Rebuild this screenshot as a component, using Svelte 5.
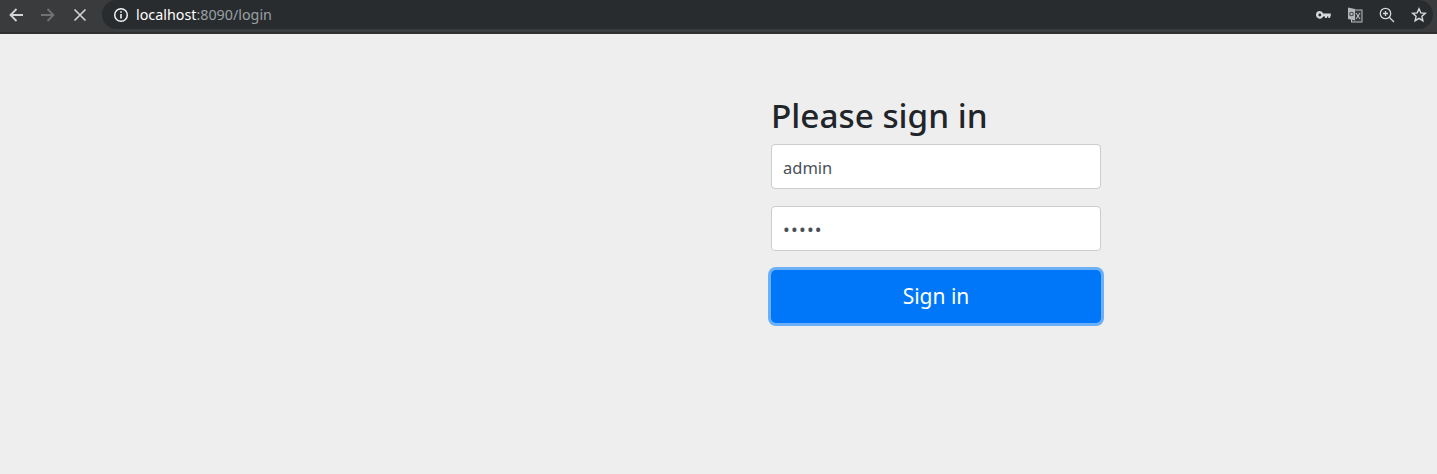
<script>
    let username = 'admin';
    let password = 'admin';
</script>

<div class="toolbar">
    <button class="nav" aria-label="Back">
        <svg width="16" height="16" viewBox="0 0 16 16"><path d="M15 8H3M8.500 2L2.500 8l6 6" fill="none" stroke="#d4d5d6" stroke-width="1.800"/></svg>
    </button>
    <button class="nav" aria-label="Forward">
        <svg width="16" height="16" viewBox="0 0 16 16"><path d="M1 8h12M7.500 2l6 6-6 6" fill="none" stroke="#707274" stroke-width="1.800"/></svg>
    </button>
    <button class="nav" aria-label="Stop">
        <svg width="14" height="14" viewBox="0 0 14 14"><path d="M1.500 1.500l11 11M12.500 1.500l-11 11" fill="none" stroke="#d4d5d6" stroke-width="1.600"/></svg>
    </button>
    <div class="omnibox">
        <svg class="info" width="16" height="16" viewBox="0 0 16 16">
            <circle cx="8" cy="8" r="6.300" fill="none" stroke="#f1f3f4" stroke-width="1.500"/>
            <path d="M8 7v4.500M8 4.300v1.500" stroke="#f1f3f4" stroke-width="1.600"/>
        </svg>
        <span class="url"><span class="host">localhost</span>:8090/login</span>
        <div class="actions">
            <svg width="15" height="8" viewBox="0 0 15 8"><path d="M3.800 0a3.800 3.800 0 1 0 3.400 5.500H9V7h2V5.500h1.300V7h1.500l1-2.500V2.500H7.200A3.800 3.800 0 0 0 3.800 0zm0 2.600a1.400 1.400 0 1 1 0 2.800 1.400 1.400 0 0 1 0-2.800z" fill="#d5d7d9" fill-rule="evenodd"/></svg>
            <svg width="16" height="16" viewBox="0 0 16 16">
                <rect x="4" y="2.500" width="11.500" height="13" fill="#b9bbbc"/>
                <rect x="5" y="3.500" width="9.500" height="11" fill="#3a3d40"/>
                <path d="M1 0.500l7 1.500v11.500l-7-1.500z" fill="#b4b6b8"/>
                <path d="M9 6l4 6M13 6l-4 6" stroke="#c9cbcc" stroke-width="1"/>
                <circle cx="4.500" cy="7" r="1.800" fill="none" stroke="#45484a" stroke-width="1.100"/>
            </svg>
            <svg width="16" height="16" viewBox="0 0 16 16">
                <circle cx="6.500" cy="6.500" r="5.200" fill="none" stroke="#d5d7d9" stroke-width="1.300"/>
                <path d="M10.200 10.200L15 15M4 6.500h5M6.500 4v5" stroke="#d5d7d9" stroke-width="1.300"/>
            </svg>
            <svg width="16" height="16" viewBox="0 0 16 16"><path d="M8 1.800l1.800 4.100 4.500.4-3.400 3 1 4.400L8 11.400l-3.900 2.300 1-4.400-3.400-3 4.500-.4z" fill="none" stroke="#d9dbdc" stroke-width="1.400"/></svg>
        </div>
    </div>
</div>

<main>
    <form class="form-signin" on:submit|preventDefault>
        <h2>Please sign in</h2>
        <input type="text" bind:value={username} placeholder="Username" />
        <input class="pass" type="password" bind:value={password} placeholder="Password" />
        <button type="submit" class="btn">Sign in</button>
    </form>
</main>

<style>
    :global(body) {
        background: #eeeeee;
        font-family: "Noto Sans", "Open Sans", sans-serif;
    }

    .toolbar {
        display: flex;
        align-items: flex-start;
        box-sizing: border-box;
        height: 34px;
        background: #3a3b3c;
        border-bottom: 2px solid #2f3032;
        padding-right: 4px;
    }

    .nav {
        width: 32px;
        height: 29px;
        background: none;
        border: 0;
        padding: 0;
        display: flex;
        align-items: center;
        justify-content: center;
    }

    .omnibox {
        flex: 1;
        display: flex;
        align-items: center;
        height: 29px;
        margin-left: 6px;
        padding-left: 11px;
        border-radius: 15px;
        background: #292c2f;
    }

    .info {
        margin-right: 7px;
    }

    .url {
        font-size: 14.300px;
        color: #9aa0a6;
    }

    .host {
        color: #fff;
    }

    .actions {
        margin-left: auto;
        display: flex;
        align-items: center;
        gap: 16px;
        padding-right: 6px;
    }

    main {
        box-sizing: border-box;
        height: 440px;
        padding: 61px 0 0 771px;
    }

    .form-signin {
        width: 330px;
    }

    h2 {
        margin: 0 0 9px;
        font-size: 33.300px;
        font-weight: 500;
        line-height: 40px;
        color: #212529;
    }

    input {
        display: block;
        box-sizing: border-box;
        width: 100%;
        height: 45px;
        margin-bottom: 17px;
        padding: 1px 11px 0;
        border: 1px solid #cbcccd;
        border-radius: 4px;
        background: #fff;
        font-family: inherit;
        font-size: 16.500px;
        color: #495057;
    }

    .pass {
        font-size: 18px;
        letter-spacing: 1.200px;
    }

    .btn {
        display: block;
        width: 100%;
        height: 53px;
        margin-top: 19px;
        padding: 0 0 2px;
        border: 0;
        border-radius: 5px;
        background: #0077f8;
        box-shadow: 0 0 0 3px rgba(0, 123, 255, 0.55);
        font-family: inherit;
        font-size: 21px;
        color: #fff;
    }
</style>
